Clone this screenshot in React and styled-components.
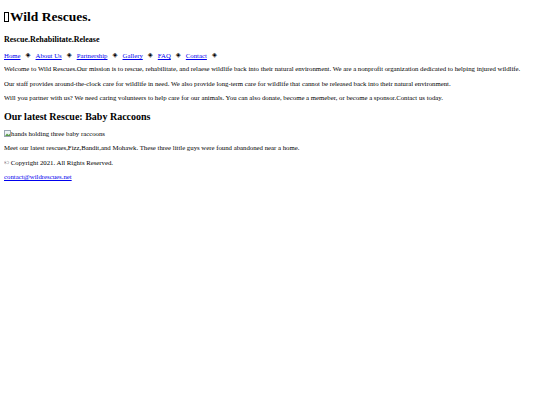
import React from 'react'
import styled, { createGlobalStyle } from 'styled-components'

const Global = createGlobalStyle`
  body {
    margin: 4px;
    font-family: 'Liberation Serif', 'Times New Roman', serif;
    font-size: 6.78px;
    line-height: 7.5px;
    color: #000;
    background: #fff;
  }
`

const Header = styled.header``

const Title = styled.h1`
  font-size: 13.5px;
  line-height: 15.5px;
  font-weight: 700;
  margin: 5px 0 10px;
`

const Tofu = styled.span`
  display: inline-block;
  width: 3px;
  height: 8px;
  border: 1px solid #000;
  margin-right: 1px;
  vertical-align: -1px;
`

const Tagline = styled.h3`
  font-size: 8px;
  line-height: 9.2px;
  font-weight: 700;
  margin: 0 0 8.5px;
`

const Nav = styled.nav`
  display: flex;
  align-items: center;
  margin-bottom: 5.5px;
`

const NavLink = styled.a`
  color: #0000ee;
  text-decoration: underline;
`

const Sep = styled.span`
  margin: 0 5px;
  font-family: 'DejaVu Sans', sans-serif;
  font-size: 6.5px;
`

const Para = styled.p`
  margin: 0 0 7px;
`

const Heading = styled.h2`
  font-size: 10px;
  line-height: 11.5px;
  font-weight: 700;
  margin: 9.5px 0 7.5px;
`

const Broken = styled.div`
  display: flex;
  align-items: center;
  margin-bottom: 6.5px;
`

const Mail = styled.a`
  color: #0000ee;
  text-decoration: underline;
`

const links = ['Home', 'About Us', 'Partnership', 'Gallery', 'FAQ', 'Contact']

export default function App() {
  return (
    <>
      <Global />
      <Header>
        <Title><Tofu />Wild Rescues.</Title>
        <Tagline>Rescue.Rehabilitate.Release</Tagline>
        <Nav>
          {links.map((l) => (
            <React.Fragment key={l}>
              <NavLink href='#'>{l}</NavLink>
              <Sep>◈</Sep>
            </React.Fragment>
          ))}
        </Nav>
      </Header>
      <main>
        <Para>Welcome to Wild Rescues.Our mission is to rescue, rehabilitate, and relaese wildlife back into their natural environment. We are a nonprofit organization dedicated to helping injured wildlife.</Para>
        <Para>Our staff provides around-the-clock care for wildlife in need. We also provide long-term care for wildlife that cannot be released back into their natural environment.</Para>
        <Para>Will you partner with us? We need caring volunteers to help care for our animals. You can also donate, become a memeber, or become a sponsor.Contact us today.</Para>
        <Heading>Our latest Rescue: Baby Raccoons</Heading>
        <Broken>
          <svg width='7' height='7' viewBox='0 0 7 7'>
            <rect x='0.5' y='0.5' width='6' height='6' fill='#eef3f7' stroke='#9aa6b2' />
            <path d='M1 6 L3 3.5 L4.5 5 L6 3.8 L6 6 Z' fill='#5a9c4a' />
          </svg>
          <span>hands holding three baby raccoons</span>
        </Broken>
        <Para>Meet our latest rescues,Fizz,Bandit,and Mohawk. These three little guys were found abandoned near a home.</Para>
      </main>
      <footer>
        <Para>© Copyright 2021. All Rights Reserved.</Para>
        <Mail href='#'>contact@wildrescues.net</Mail>
      </footer>
    </>
  )
}
